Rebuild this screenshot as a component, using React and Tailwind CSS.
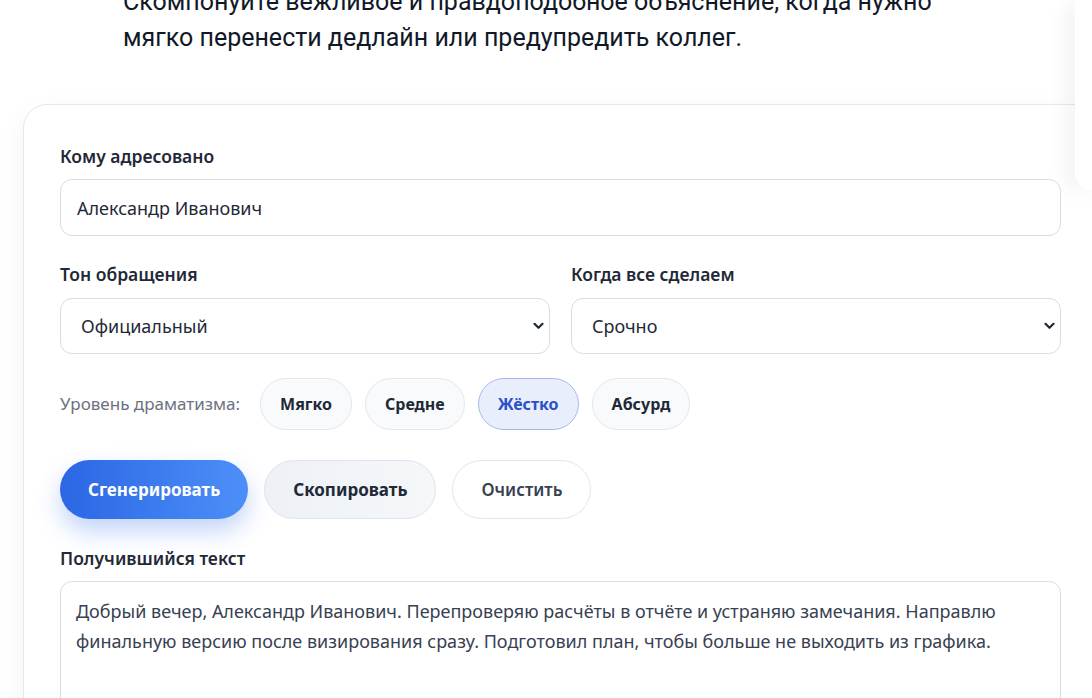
import React from "react";

function Chevron() {
  return (
    <svg
      className="pointer-events-none absolute right-[6px] top-1/2 -translate-y-1/2"
      width="11"
      height="8"
      viewBox="0 0 11 8"
      fill="none"
    >
      <path d="M1.5 1.8 L5.5 5.8 L9.5 1.8" stroke="#1f2937" strokeWidth="2.2" strokeLinecap="round" strokeLinejoin="round" />
    </svg>
  );
}

function Select({ value }) {
  return (
    <div className="relative">
      <select
        defaultValue={value}
        className="h-[56px] w-full appearance-none rounded-[12px] border border-[#d9dce4] bg-white pl-5 pr-8 text-[18px] text-[#1f2937] outline-none"
      >
        <option>{value}</option>
      </select>
      <Chevron />
    </div>
  );
}

export default function App() {
  const font = { fontFamily: '"Noto Sans", "Open Sans", sans-serif' };
  const pills = ["Мягко", "Средне", "Жёстко", "Абсурд"];
  return (
    <div className="relative h-[698px] w-full overflow-hidden bg-white" style={font}>
      <p
        className="ml-[123px] mt-[-16px] w-[830px] text-[25px] leading-[36px] text-[#111827]"
        style={{ fontFamily: 'Roboto, "Noto Sans", sans-serif' }}
      >
        Скомпонуйте вежливое и правдоподобное объяснение, когда нужно мягко перенести дедлайн или предупредить коллег.
      </p>

      <div className="ml-[23px] mt-[48px] w-[1075px] rounded-[24px] border border-[#e5e7eb] bg-white px-[36px] pt-[39px] pb-10 shadow-[0_10px_30px_rgba(15,23,42,0.05)]">
        <div className="text-[17.5px] font-semibold leading-6 text-[#1f2937]">Кому адресовано</div>
        <input
          readOnly
          value="Александр Иванович"
          className="mt-[11px] h-[57px] w-full rounded-[12px] border border-[#d9dce4] bg-white px-4 text-[18px] text-[#1f2937] outline-none"
        />

        <div className="mt-[26px] grid grid-cols-2 gap-[21px]">
          <div>
            <div className="mb-[12px] text-[17.5px] font-semibold leading-6 text-[#1f2937]">Тон обращения</div>
            <Select value="Официальный" />
          </div>
          <div>
            <div className="mb-[12px] text-[17.5px] font-semibold leading-6 text-[#1f2937]">Когда все сделаем</div>
            <Select value="Срочно" />
          </div>
        </div>

        <div className="mt-[24px] flex items-center">
          <span className="mr-[20px] text-[17px] text-[#6b7280]">Уровень драматизма:</span>
          <div className="flex gap-[13px]">
            {pills.map((p) =>
              p === "Жёстко" ? (
                <button
                  key={p}
                  className="h-[52px] rounded-full border border-[#a9b9ee] bg-[#e8eefc] px-[19px] text-[16px] font-bold text-[#2b50c8]"
                >
                  {p}
                </button>
              ) : (
                <button
                  key={p}
                  className="h-[52px] rounded-full border border-[#e3e7ee] bg-[#f8fafc] px-[19px] text-[16px] font-bold text-[#1f2937]"
                >
                  {p}
                </button>
              )
            )}
          </div>
        </div>

        <div className="mt-[30px] flex gap-4">
          <button className="h-[59px] rounded-full bg-gradient-to-r from-[#2c66e4] to-[#4d8ff8] px-7 text-[17px] font-bold text-white shadow-[0_12px_24px_rgba(37,99,235,0.28)]">
            Сгенерировать
          </button>
          <button className="h-[59px] rounded-full border border-[#dfe3ea] bg-gradient-to-r from-[#edf1f6] to-[#f5f7fa] px-7 text-[17px] font-bold text-[#1f2937]">
            Скопировать
          </button>
          <button className="h-[59px] rounded-full border border-[#e3e6eb] bg-white px-7 text-[17px] font-semibold text-[#374151]">
            Очистить
          </button>
        </div>

        <div className="mt-[27px] text-[17.5px] font-semibold leading-6 text-[#1f2937]">Получившийся текст</div>
        <textarea
          readOnly
          value="Добрый вечер, Александр Иванович. Перепроверяю расчёты в отчёте и устраняю замечания. Направлю финальную версию после визирования сразу. Подготовил план, чтобы больше не выходить из графика."
          className="mt-[11px] block h-[180px] w-full resize-none rounded-[12px] border border-[#d9dce4] bg-white px-[15px] pt-[14px] text-[18px] leading-[30px] text-[#374151] outline-none"
        />
      </div>

      <div className="absolute left-[1075px] right-0 top-0 h-[190px] rounded-bl-[22px] bg-white shadow-[-6px_4px_22px_rgba(15,23,42,0.07)]" />
    </div>
  );
}
